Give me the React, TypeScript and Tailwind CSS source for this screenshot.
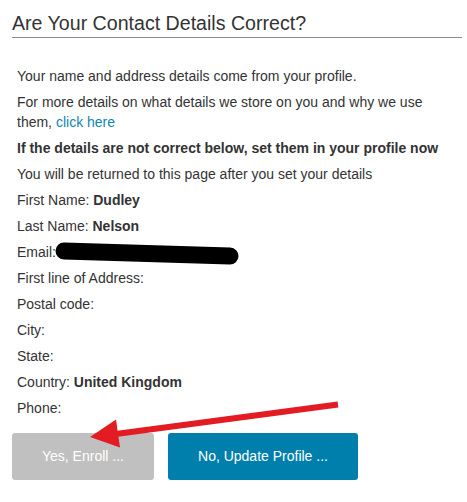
import React from "react";

export default function App() {
  const rows: [string, string][] = [
    ["First Name: ", "Dudley"],
    ["Last Name: ", "Nelson"],
    ["Email:", ""],
    ["First line of Address:", ""],
    ["Postal code:", ""],
    ["City:", ""],
    ["State:", ""],
    ["Country: ", "United Kingdom"],
    ["Phone:", ""],
  ];
  return (
    <div
      className="relative w-[467px] h-[502px] bg-white text-[#333333] overflow-hidden"
      style={{ fontFamily: '"Liberation Sans", Arial, sans-serif' }}
    >
      <div className="pl-[12px] w-[462px]">
        <h1 className="mt-[12px] text-[19.6px] leading-[22px] pb-[3px] border-b border-[#8c8c8c] text-[#333333] font-normal">
          Are Your Contact Details Correct?
        </h1>
        <div className="mt-[28px] px-[5px] text-[14px] leading-[20px]">
          <p className="mb-[6px]">Your name and address details come from your profile.</p>
          <p className="mb-[6px]">
            For more details on what details we store on you and why we use them,{" "}
            <a className="text-[#0e86b0]">click here</a>
          </p>
          <p className="mb-[6px] font-bold">If the details are not correct below, set them in your profile now</p>
          <p className="mb-[6px]">You will be returned to this page after you set your details</p>
          {rows.map(([k, v]) => (
            <p key={k} className="mb-[6px]">
              {k}
              {v && <b>{v}</b>}
            </p>
          ))}
        </div>
        <div className="mt-[15px] flex gap-[14px]">
          <button className="h-[47px] w-[142px] rounded-[3px] bg-[#c0c0c0] text-white text-[14px] flex items-center justify-center">
            Yes, Enroll ...
          </button>
          <button className="h-[47px] w-[190px] rounded-[3px] bg-[#007fad] text-white text-[14px] flex items-center justify-center">
            No, Update Profile ...
          </button>
        </div>
      </div>
      <svg className="absolute left-0 top-0 pointer-events-none" width="467" height="502" viewBox="0 0 467 502">
        <line x1="64" y1="251" x2="230" y2="256" stroke="#000" strokeWidth="17" strokeLinecap="round" />
        <line x1="338" y1="404.5" x2="112" y2="434.5" stroke="#e31b23" strokeWidth="6" />
        <polygon points="90,437 116,419.5 120,447.5" fill="#e31b23" />
      </svg>
    </div>
  );
}
